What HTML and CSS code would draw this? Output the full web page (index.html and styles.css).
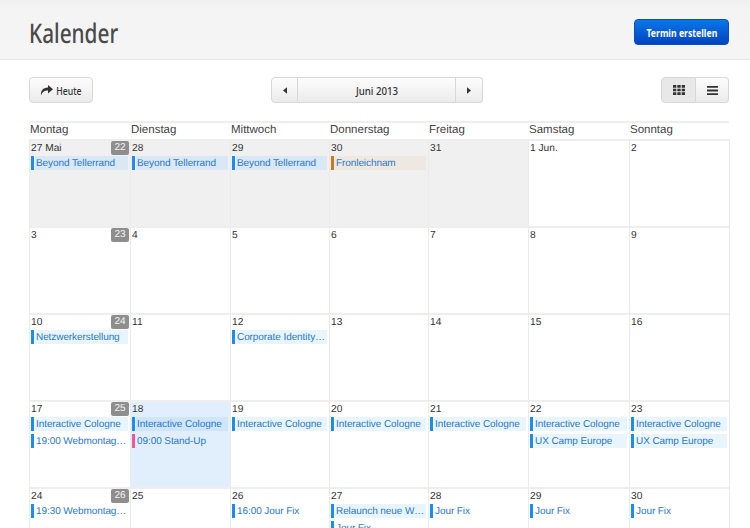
FILE: index.html
```html
<!DOCTYPE html>
<html lang="de">
<head>
<meta charset="utf-8">
<title>Kalender</title>
<link rel="stylesheet" href="styles.css">
</head>
<body>
<header class="page-head">
  <h1 class="title">Kalender</h1>
  <button class="btn-primary"><span class="cond">Termin erstellen</span></button>
</header>
<main class="content">
  <div class="toolbar">
    <button class="btn btn-today">
      <svg class="ico-share" viewBox="0 0 13 11" width="13" height="11"><path d="M8 0l5 4.2L8 8.4V5.6C4.6 5.6 2.4 6.800 1 10.500 0.500 5.500 3 2.700 8 2.500z" fill="#333"/></svg>
      <span class="cond cond-today">Heute</span>
    </button>
    <div class="btn-group">
      <button class="btn seg seg-prev"><svg viewBox="0 0 5 8" width="4" height="7"><path d="M5 0v8L0 4z" fill="#333"/></svg></button>
      <button class="btn seg seg-month"><span class="cond cond-month">Juni 2013</span></button>
      <button class="btn seg seg-next"><svg viewBox="0 0 5 8" width="4" height="7"><path d="M0 0v8l5-4z" fill="#333"/></svg></button>
    </div>
    <div class="btn-group">
      <button class="btn seg seg-view is-active"><svg viewBox="0 0 12 10" width="12" height="10"><path d="M0 0h3.300v2.700H0zM4.350 0h3.300v2.700h-3.300zM8.700 0H12v2.700H8.700zM0 3.650h3.300v2.700H0zM4.350 3.650h3.300v2.700h-3.300zM8.700 3.650H12v2.700H8.700zM0 7.300h3.300V10H0zM4.350 7.300h3.300V10h-3.300zM8.700 7.300H12V10H8.700z" fill="#333"/></svg></button>
      <button class="btn seg seg-list"><svg viewBox="0 0 11 9" width="11" height="9"><path d="M0 0h11v1.800H0zM0 3.600h11v1.800H0zM0 7.200h11V9H0z" fill="#333"/></svg></button>
    </div>
  </div>

  <div class="weekdays">
    <div>Montag</div><div>Dienstag</div><div>Mittwoch</div><div>Donnerstag</div><div>Freitag</div><div>Samstag</div><div>Sonntag</div>
  </div>

  <div class="month">
    <div class="day past"><span class="num">27 Mai</span><span class="week">22</span><div class="ev ev-past">Beyond Tellerrand</div></div>
    <div class="day past"><span class="num">28</span><div class="ev ev-past">Beyond Tellerrand</div></div>
    <div class="day past"><span class="num">29</span><div class="ev ev-past">Beyond Tellerrand</div></div>
    <div class="day past"><span class="num">30</span><div class="ev ev-holiday">Fronleichnam</div></div>
    <div class="day past"><span class="num">31</span></div>
    <div class="day"><span class="num">1 Jun.</span></div>
    <div class="day"><span class="num">2</span></div>

    <div class="day"><span class="num">3</span><span class="week">23</span></div>
    <div class="day"><span class="num">4</span></div>
    <div class="day"><span class="num">5</span></div>
    <div class="day"><span class="num">6</span></div>
    <div class="day"><span class="num">7</span></div>
    <div class="day"><span class="num">8</span></div>
    <div class="day"><span class="num">9</span></div>

    <div class="day"><span class="num">10</span><span class="week">24</span><div class="ev">Netzwerkerstellung</div></div>
    <div class="day"><span class="num">11</span></div>
    <div class="day"><span class="num">12</span><div class="ev">Corporate Identity Design</div></div>
    <div class="day"><span class="num">13</span></div>
    <div class="day"><span class="num">14</span></div>
    <div class="day"><span class="num">15</span></div>
    <div class="day"><span class="num">16</span></div>

    <div class="day"><span class="num">17</span><span class="week">25</span><div class="ev">Interactive Cologne</div><div class="ev ev-plain">19:00 Webmontag Köln</div></div>
    <div class="day today"><span class="num">18</span><div class="ev ev-today">Interactive Cologne</div><div class="ev ev-plain ev-pink">09:00 Stand-Up</div></div>
    <div class="day"><span class="num">19</span><div class="ev">Interactive Cologne</div></div>
    <div class="day"><span class="num">20</span><div class="ev">Interactive Cologne</div></div>
    <div class="day"><span class="num">21</span><div class="ev">Interactive Cologne</div></div>
    <div class="day"><span class="num">22</span><div class="ev">Interactive Cologne</div><div class="ev">UX Camp Europe</div></div>
    <div class="day"><span class="num">23</span><div class="ev">Interactive Cologne</div><div class="ev">UX Camp Europe</div></div>

    <div class="day"><span class="num">24</span><span class="week">26</span><div class="ev ev-plain">19:30 Webmontag Köln</div></div>
    <div class="day"><span class="num">25</span></div>
    <div class="day"><span class="num">26</span><div class="ev ev-plain">16:00 Jour Fix</div></div>
    <div class="day"><span class="num">27</span><div class="ev">Relaunch neue Website</div><div class="ev ev-plain">Jour Fix</div></div>
    <div class="day"><span class="num">28</span><div class="ev ev-plain">Jour Fix</div></div>
    <div class="day"><span class="num">29</span><div class="ev ev-plain">Jour Fix</div></div>
    <div class="day"><span class="num">30</span><div class="ev ev-plain">Jour Fix</div></div>
  </div>
</main>
</body>
</html>
```
FILE: styles.css
```css
* { box-sizing: border-box; }
html, body { margin: 0; height: 528px; overflow: hidden; background: #fff; }
body { font-family: "Liberation Sans", Arial, sans-serif; color: #333; text-rendering: geometricPrecision; }

.page-head {
  height: 60px;
  padding: 19px 21px 0 29px;
  display: flex;
  justify-content: space-between;
  align-items: flex-start;
  background: linear-gradient(#eeeeee 0, #f4f4f4 8px, #f5f5f5 100%);
  border-bottom: 1px solid #e6e6e6;
}
.title {
  margin: 0;
  font-family: "Noto Sans", sans-serif;
  font-weight: 500;
  font-size: 27px;
  line-height: 28px;
  color: #4a4a4a;
  transform: scaleX(0.77);
  transform-origin: left center;
}
.cond { display: inline-block; transform: scaleX(0.79); white-space: nowrap; }
.cond-today { margin: 0 -3px; }
.cond-month { transform: scaleX(0.88); }
.btn-primary {
  width: 95px;
  height: 26px;
  padding: 0;
  border: 1px solid #0a4fc0;
  border-radius: 4px;
  background: linear-gradient(#0a78e6, #0043c4);
  color: #fff;
  font-family: "Noto Sans", sans-serif;
  font-weight: 700;
  font-size: 11px;
}

.content { padding: 17px 21px 0 29px; }
.toolbar { display: flex; justify-content: space-between; align-items: flex-start; height: 27px; }
.btn {
  height: 26px;
  padding: 0;
  border: 1px solid #d8d8d8;
  border-radius: 4px;
  background: linear-gradient(#fdfdfd, #ebebeb);
  color: #333;
  font-family: "Noto Sans", sans-serif;
  font-weight: 500;
  font-size: 11px;
  display: flex;
  align-items: center;
  justify-content: center;
}
.btn-today { width: 64px; gap: 3px; }
.btn-group { display: flex; }
.seg { border-radius: 0; border-left-width: 0; }
.seg:first-child { border-left-width: 1px; border-radius: 4px 0 0 4px; }
.seg:last-child { border-radius: 0 4px 4px 0; }
.seg-prev { width: 27px; }
.seg-month { width: 158px; }
.seg-next { width: 27px; }
.seg-view { width: 35px; }
.seg-list { width: 33px; }
.is-active { background: #e8e8e8; }

.weekdays {
  display: grid;
  grid-template-columns: 101px 100px 99px 99px 100px 101px 100px;
  margin-top: 17px;
  height: 18px;
  border-top: 2px solid #eee;
  font-size: 11.5px;
  line-height: 15px;
  color: #444;
}
.weekdays > div { padding-left: 1px; }

.month {
  display: grid;
  grid-template-columns: 101px 100px 99px 99px 100px 101px 100px;
  grid-auto-rows: 87px;
  border-right: 1px solid #ebebeb;
  width: 701px;
}
.day {
  position: relative;
  border-left: 1px solid #ebebeb;
  border-top: 2px solid #eee;
  padding: 0 0 0 1px;
  font-size: 10.2px;
}
.past { background: #f0f0f0; }
.today { background: #e1effd; }
.num { display: block; height: 15px; line-height: 16px; color: #333; }
.week {
  position: absolute;
  top: 0;
  right: 1px;
  width: 18px;
  height: 14px;
  border-radius: 2px;
  background: #8e8e8e;
  color: #f4f4f4;
  font-size: 10px;
  line-height: 14px;
  text-align: center;
}
.ev {
  height: 14px;
  margin-bottom: 3px;
  margin-right: 2px;
  padding-left: 2px;
  line-height: 16px;
  font-size: 10px;
  letter-spacing: -0.08px;
  color: #2a78c8;
  white-space: nowrap;
  overflow: hidden;
  text-overflow: ellipsis;
  border-left: 3px solid #1b8cf2;
  background: linear-gradient(#e8f5fd, #e8f5fd) no-repeat 1px 0 / 100% 100%;
}
.ev-past { background-image: linear-gradient(#d9e8f4, #d9e8f4); }
.ev-holiday { background-image: linear-gradient(#efe8e0, #efe8e0); border-left-color: #d0761c; }
.ev-today { background-image: linear-gradient(#cfe5fa, #cfe5fa); }
.ev-plain { background-image: none; }
.ev-pink { border-left-color: #f0559a; }
```
